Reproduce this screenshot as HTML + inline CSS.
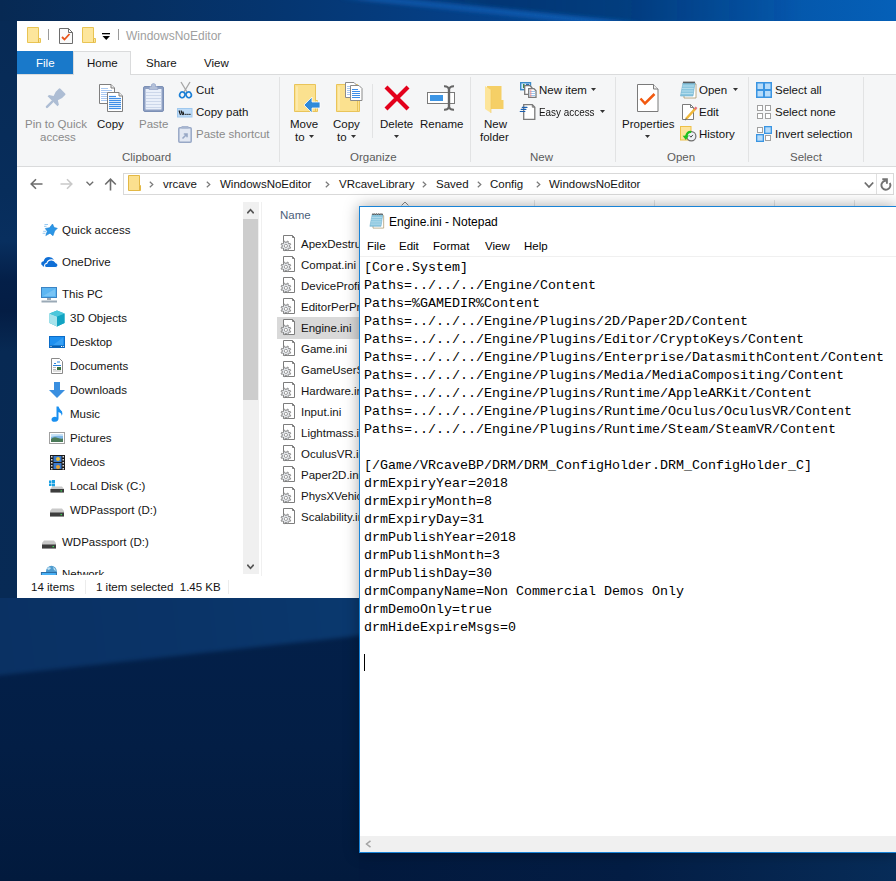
<!DOCTYPE html>
<html><head><meta charset="utf-8">
<style>
*{box-sizing:border-box}
html,body{margin:0;padding:0}
body{width:896px;height:881px;overflow:hidden;position:relative;font-family:"Liberation Sans",sans-serif;font-size:12px;color:#141414;background:#0a2a55}
.a{position:absolute}
.t{position:absolute;white-space:nowrap;font-size:11.5px;line-height:12px}
.m{position:absolute;white-space:pre;font-family:"Liberation Mono",monospace;font-size:13.33px;line-height:18px;color:#000}
svg{position:absolute;overflow:visible}
</style></head><body>
<!-- desktop background -->
<div class="a" style="left:0;top:0;width:896px;height:881px;background:linear-gradient(180deg,#0b2b57 0px,#0a2a55 250px,#092851 330px,#0a2b57 600px,#06224a 881px)"></div>
<svg style="left:0;top:0;overflow:hidden" width="896" height="21" viewBox="0 0 896 21">
<defs><linearGradient id="tg" x1="0" x2="1" y1="0" y2="0"><stop offset="0" stop-color="#072953"/><stop offset="0.3" stop-color="#05356f"/><stop offset="0.5" stop-color="#053f85"/><stop offset="0.7" stop-color="#044a98"/><stop offset="0.85" stop-color="#0455a8"/><stop offset="1" stop-color="#0560b8"/></linearGradient>
<filter id="bl" x="-20%" y="-200%" width="140%" height="500%"><feGaussianBlur stdDeviation="2.5"/></filter>
<filter id="bl2" x="-20%" y="-200%" width="140%" height="500%"><feGaussianBlur stdDeviation="5"/></filter></defs>
<rect width="896" height="21" fill="url(#tg)"/>
<linearGradient id="dg" x1="0" x2="1" y1="0" y2="0"><stop offset="0" stop-color="#052f66" stop-opacity="0"/><stop offset="0.3" stop-color="#052f66" stop-opacity="0.6"/><stop offset="0.6" stop-color="#052f66" stop-opacity="0.5"/><stop offset="1" stop-color="#052f66" stop-opacity="0"/></linearGradient><polygon points="360,-6 800,-6 800,24 640,24" fill="url(#dg)" filter="url(#bl)"/>
<polygon points="340,-3 372,-3 640,24 606,24" fill="#1f74d6" opacity="0.85" filter="url(#bl)"/>
</svg>
<div class="a" style="left:0;top:598px;width:359px;height:283px;overflow:hidden;background:linear-gradient(180deg,#03204a 0px,#031e45 150px,#021a3d 283px)">
<div class="a" style="left:-20px;top:-60px;width:420px;height:116px;background:linear-gradient(90deg,#0a3163 0%,#0a3468 50%,#0b3a70 100%);transform:rotate(-6.3deg);filter:blur(2px)"></div>
</div>
<div class="a" style="left:359px;top:852px;width:537px;height:29px;background:linear-gradient(90deg,#02193d 0%,#031d44 50%,#072c58 100%)"></div>
<div class="a" style="left:0;top:21px;width:17px;height:577px;background:linear-gradient(180deg,#072a55 0px,#072d5b 170px,#082f5f 220px,#041f48 260px,#041d44 290px,#072953 330px,#072a55 577px)"></div>
<!-- ============ EXPLORER ============ -->
<div class="a" style="left:17px;top:21px;width:879px;height:577px;background:#fff"></div>
<!-- title bar icons -->
<svg style="left:27px;top:27px" width="14" height="16" viewBox="0 0 14 16"><path d="M0.5 0.5H11.5V11.5H13.5V15.5H0.5Z" fill="#fde69c" stroke="#e9c453"/><path d="M11.5 11.5V15.5" stroke="#e3b845"/></svg>
<div class="a" style="left:48px;top:29px;width:1px;height:11px;background:#9a9a9a"></div>
<svg style="left:59px;top:28px" width="14" height="16" viewBox="0 0 14 16"><path d="M0.5 0.5H9.5L13.5 4.5V15.5H0.5Z" fill="#fafafa" stroke="#6d6d6d"/><path d="M9.5 0.5V4.5H13.5" fill="none" stroke="#6d6d6d"/><path d="M3 9L5.5 11.5L10.5 6" fill="none" stroke="#e8541a" stroke-width="1.8"/></svg>
<svg style="left:82px;top:27px" width="14" height="16" viewBox="0 0 14 16"><path d="M0.5 0.5H11.5V11.5H13.5V15.5H0.5Z" fill="#fde69c" stroke="#e9c453"/><path d="M11.5 11.5V15.5" stroke="#e3b845"/></svg>
<svg style="left:102px;top:33px" width="9" height="8" viewBox="0 0 9 8"><rect x="0" y="0" width="8" height="1.3" fill="#000"/><path d="M0.5 3H8L4.25 7Z" fill="#000"/></svg>
<div class="a" style="left:118px;top:29px;width:1px;height:11px;background:#9a9a9a"></div>
<div class="t" style="left:126px;top:30px;font-size:12px;color:#a0a0a0">WindowsNoEditor</div>

<!-- tabs -->
<div class="a" style="left:17px;top:51px;width:56px;height:23px;background:#1979ca"></div>
<div class="t" style="left:36px;top:57px;color:#fff">File</div>
<div class="a" style="left:17px;top:74px;width:879px;height:93px;background:#f5f6f7;border-top:1px solid #dadbdc;border-bottom:1px solid #dadbdc"></div>
<div class="a" style="left:73px;top:51px;width:58px;height:24px;background:#f5f6f7;border:1px solid #dadbdc;border-bottom:none"></div>
<div class="t" style="left:87px;top:57px">Home</div>
<div class="t" style="left:146px;top:57px">Share</div>
<div class="t" style="left:204px;top:57px">View</div>

<!-- ribbon group separators -->
<div class="a" style="left:279px;top:77px;width:1px;height:85px;background:#e2e3e4"></div>
<div class="a" style="left:372px;top:84px;width:1px;height:54px;background:#e2e3e4"></div>
<div class="a" style="left:470px;top:77px;width:1px;height:85px;background:#e2e3e4"></div>
<div class="a" style="left:615px;top:77px;width:1px;height:85px;background:#e2e3e4"></div>
<div class="a" style="left:748px;top:77px;width:1px;height:85px;background:#e2e3e4"></div>
<div class="a" style="left:863px;top:77px;width:1px;height:85px;background:#e2e3e4"></div>

<!-- group labels -->
<div class="t" style="left:122px;top:151px;color:#5b5b5b">Clipboard</div>
<div class="t" style="left:350px;top:151px;color:#5b5b5b">Organize</div>
<div class="t" style="left:530px;top:151px;color:#5b5b5b">New</div>
<div class="t" style="left:667px;top:151px;color:#5b5b5b">Open</div>
<div class="t" style="left:790px;top:151px;color:#5b5b5b">Select</div>

<!-- Clipboard group -->
<div class="t" style="left:25px;top:118px;color:#8a8a8a">Pin to Quick</div>
<div class="t" style="left:40px;top:131px;color:#8a8a8a">access</div>
<div class="t" style="left:97px;top:118px">Copy</div>
<div class="t" style="left:139px;top:118px;color:#8a8a8a">Paste</div>
<div class="t" style="left:196px;top:84px">Cut</div>
<div class="t" style="left:196px;top:106px">Copy path</div>
<div class="t" style="left:196px;top:128px;color:#8a8a8a">Paste shortcut</div>

<!-- Organize group -->
<div class="t" style="left:290px;top:118px">Move</div>
<div class="t" style="left:295px;top:131px">to</div>
<div class="t" style="left:333px;top:118px">Copy</div>
<div class="t" style="left:337px;top:131px">to</div>
<div class="t" style="left:380px;top:118px">Delete</div>
<div class="t" style="left:420px;top:118px">Rename</div>

<!-- New group -->
<div class="t" style="left:484px;top:118px">New</div>
<div class="t" style="left:480px;top:131px">folder</div>
<div class="t" style="left:539px;top:84px">New item</div>
<div class="t" style="left:539px;top:106px;transform:scaleX(0.86);transform-origin:0 0">Easy access</div>

<!-- Open group -->
<div class="t" style="left:622px;top:118px">Properties</div>
<div class="t" style="left:699px;top:84px">Open</div>
<div class="t" style="left:699px;top:106px">Edit</div>
<div class="t" style="left:699px;top:128px">History</div>

<!-- Select group -->
<div class="t" style="left:775px;top:84px">Select all</div>
<div class="t" style="left:775px;top:106px">Select none</div>
<div class="t" style="left:775px;top:128px">Invert selection</div>

<!-- dropdown arrows -->
<svg style="left:309px;top:135px" width="5" height="3"><path d="M0 0H5L2.5 3Z" fill="#333"/></svg>
<svg style="left:351px;top:135px" width="5" height="3"><path d="M0 0H5L2.5 3Z" fill="#333"/></svg>
<svg style="left:394px;top:135px" width="5" height="3"><path d="M0 0H5L2.5 3Z" fill="#333"/></svg>
<svg style="left:591px;top:88px" width="5" height="3"><path d="M0 0H5L2.5 3Z" fill="#333"/></svg>
<svg style="left:600px;top:110px" width="5" height="3"><path d="M0 0H5L2.5 3Z" fill="#333"/></svg>
<svg style="left:645px;top:135px" width="5" height="3"><path d="M0 0H5L2.5 3Z" fill="#333"/></svg>
<svg style="left:733px;top:88px" width="5" height="3"><path d="M0 0H5L2.5 3Z" fill="#333"/></svg>

<!-- address bar row -->
<div class="a" style="left:123px;top:173px;width:771px;height:22px;border:1px solid #d9d9d9;background:#fff"></div>
<div class="t" style="left:163px;top:178px">vrcave</div>
<div class="t" style="left:220px;top:178px">WindowsNoEditor</div>
<div class="t" style="left:339px;top:178px">VRcaveLibrary</div>
<div class="t" style="left:436px;top:178px">Saved</div>
<div class="t" style="left:490px;top:178px">Config</div>
<div class="t" style="left:549px;top:178px">WindowsNoEditor</div>

<!-- nav pane -->
<div class="t" style="left:62px;top:224px">Quick access</div>
<div class="t" style="left:62px;top:256px">OneDrive</div>
<div class="t" style="left:62px;top:288px">This PC</div>
<div class="t" style="left:70px;top:312px">3D Objects</div>
<div class="t" style="left:70px;top:336px">Desktop</div>
<div class="t" style="left:70px;top:360px">Documents</div>
<div class="t" style="left:70px;top:384px">Downloads</div>
<div class="t" style="left:70px;top:408px">Music</div>
<div class="t" style="left:70px;top:432px">Pictures</div>
<div class="t" style="left:70px;top:456px">Videos</div>
<div class="t" style="left:70px;top:480px">Local Disk (C:)</div>
<div class="t" style="left:70px;top:504px">WDPassport (D:)</div>
<div class="t" style="left:62px;top:536px">WDPassport (D:)</div>
<div class="a" style="left:17px;top:560px;width:226px;height:15px;overflow:hidden"><div class="t" style="left:45px;top:8px">Network</div></div>

<!-- nav pane scrollbar -->
<div class="a" style="left:243px;top:202px;width:16px;height:372px;background:#f0f0f0"></div>
<div class="a" style="left:243px;top:219px;width:15px;height:181px;background:#cdcdcd"></div>
<svg style="left:247px;top:208px" width="7" height="6" viewBox="0 0 7 6"><path d="M0.8 5.6V4.6L3.5 1.6L6.2 4.6V5.6" fill="none" stroke="#555" stroke-width="1.6"/></svg>
<svg style="left:247px;top:564px" width="7" height="6" viewBox="0 0 7 6"><path d="M0.8 0.4V1.4L3.5 4.4L6.2 1.4V0.4" fill="none" stroke="#555" stroke-width="1.6"/></svg>
<div class="a" style="left:261px;top:202px;width:1px;height:374px;background:#f0f0f0"></div>

<!-- file list -->
<div class="t" style="left:280px;top:209px;color:#4c607a">Name</div>
<svg style="left:401px;top:201px" width="8" height="5" viewBox="0 0 8 5"><path d="M0.6 4.4L4 1L7.4 4.4" fill="none" stroke="#8a8a8a" stroke-width="1"/></svg>
<div class="a" style="left:534px;top:200px;width:1px;height:8px;background:#e5e5e5"></div>
<div class="a" style="left:654px;top:200px;width:1px;height:8px;background:#e5e5e5"></div>
<div class="a" style="left:774px;top:200px;width:1px;height:8px;background:#e5e5e5"></div>
<div class="a" style="left:854px;top:200px;width:1px;height:8px;background:#e5e5e5"></div>
<div class="a" style="left:277px;top:317px;width:82px;height:22px;background:#d9d9d9"></div>
<div class="t" style="left:301px;top:238px">ApexDestruction.ini</div>
<div class="t" style="left:301px;top:259px">Compat.ini</div>
<div class="t" style="left:301px;top:280px">DeviceProfiles.ini</div>
<div class="t" style="left:301px;top:301px">EditorPerProjectUserSettings.ini</div>
<div class="t" style="left:301px;top:322px">Engine.ini</div>
<div class="t" style="left:301px;top:343px">Game.ini</div>
<div class="t" style="left:301px;top:364px">GameUserSettings.ini</div>
<div class="t" style="left:301px;top:385px">Hardware.ini</div>
<div class="t" style="left:301px;top:406px">Input.ini</div>
<div class="t" style="left:301px;top:427px">Lightmass.ini</div>
<div class="t" style="left:301px;top:448px">OculusVR.ini</div>
<div class="t" style="left:301px;top:469px">Paper2D.ini</div>
<div class="t" style="left:301px;top:490px">PhysXVehicles.ini</div>
<div class="t" style="left:301px;top:511px">Scalability.ini</div>

<!-- status bar -->
<div class="t" style="left:31px;top:581px">14 items</div>
<div class="a" style="left:85px;top:580px;width:1px;height:14px;background:#ececec"></div>
<div class="t" style="left:96px;top:581px">1 item selected&nbsp; 1.45 KB</div>
<div class="a" style="left:228px;top:580px;width:1px;height:14px;background:#ececec"></div>

<!-- ============ ICONS ============ -->
<!-- pin -->
<svg style="left:46px;top:88px" width="21" height="21" viewBox="0 0 21 21"><g transform="translate(8.6,11.25) rotate(45) translate(0,-11.6)" fill="#adbdd4"><path d="M-4.5 1.2Q-4.5 0 -3.3 0H3.3Q4.5 0 4.5 1.2V5.5L3 10L7 12.5V14.5H-7V12.5L-3 10L-4.5 5.5Z"/><rect x="-1.2" y="14" width="2.4" height="9.6" rx="1.2"/></g></svg>
<!-- copy -->
<svg style="left:99px;top:84px" width="25" height="28" viewBox="0 0 25 28">
<path d="M0.5 0.5H12L15.5 4V19.5H0.5Z" fill="#fff" stroke="#7f7f7f"/><path d="M12 0.5V4H15.5" fill="#eee" stroke="#7f7f7f"/>
<g stroke="#a9c9f2" stroke-width="1"><path d="M2 4.5H9"/><path d="M2 6.5H13"/><path d="M2 8.5H13"/><path d="M2 10.5H13"/><path d="M2 12.5H13"/><path d="M2 14.5H13"/><path d="M2 16.5H13"/></g>
<path d="M8.5 8.5H20L23.5 12V27.5H8.5Z" fill="#fff" stroke="#7f7f7f"/><path d="M20 8.5V12H23.5" fill="#eee" stroke="#7f7f7f"/>
<g stroke="#3d8ee8" stroke-width="1.2"><path d="M10 12.5H17"/><path d="M10 14.5H22"/><path d="M10 16.5H22"/><path d="M10 18.5H22"/><path d="M10 20.5H22"/><path d="M10 22.5H22"/><path d="M10 24.5H22"/></g>
</svg>
<!-- paste -->
<svg style="left:143px;top:83px" width="21" height="29" viewBox="0 0 21 29">
<rect x="0.5" y="3.5" width="20" height="25" rx="1.5" fill="#8d9fc2" stroke="#7b8fb5"/>
<rect x="2.5" y="6" width="16" height="20.5" fill="#eaf0fa"/>
<g stroke="#ccd7ea"><path d="M3 9.5H18"/><path d="M3 12.5H18"/><path d="M3 15.5H18"/><path d="M3 18.5H18"/><path d="M3 21.5H18"/><path d="M3 24.5H18"/></g>
<path d="M6 6.5L7 3.5H8.5V1.5Q10.5 -0.5 12.5 1.5V3.5H14L15 6.5Z" fill="#b3c0d8" stroke="#9aaacb" stroke-width="0.8"/>
</svg>
<!-- cut -->
<svg style="left:178px;top:81px" width="15" height="18" viewBox="0 0 15 18">
<path d="M3 1L9.3 11.5" stroke="#a5a5a5" stroke-width="1.3"/><path d="M12 1L5.7 11.5" stroke="#a5a5a5" stroke-width="1.3"/>
<ellipse cx="4.3" cy="13.8" rx="2.6" ry="2.9" transform="rotate(25 4.3 13.8)" fill="none" stroke="#1b7fd6" stroke-width="1.6"/><ellipse cx="10.7" cy="13.8" rx="2.6" ry="2.9" transform="rotate(-25 10.7 13.8)" fill="none" stroke="#1b7fd6" stroke-width="1.6"/>
</svg>
<!-- copy path -->
<svg style="left:177px;top:108px" width="16" height="10" viewBox="0 0 16 10">
<rect x="0.5" y="0.5" width="14.5" height="8.5" fill="#bfdcf7" stroke="#9fc8ee"/>
<path d="M2 2.5L3.5 7M4 2.5L5.5 7M5.8 3.5L7 7" stroke="#111" stroke-width="1.1" fill="none"/><rect x="8.3" y="5.8" width="1.2" height="1.2" fill="#111"/><rect x="10.3" y="5.8" width="1.2" height="1.2" fill="#111"/><rect x="12.3" y="5.8" width="1.2" height="1.2" fill="#111"/>
</svg>
<!-- paste shortcut -->
<svg style="left:178px;top:126px" width="14" height="17" viewBox="0 0 14 17">
<rect x="0.8" y="1.8" width="12.4" height="14.4" rx="1" fill="#e2e8f3" stroke="#98a8c6" stroke-width="1.5"/>
<rect x="3.5" y="0" width="7" height="2.5" rx="0.5" fill="#a8b6d0"/>
<path d="M4.5 12.5L8.5 8.5M5.8 8H9V11.2" stroke="#98a8c6" stroke-width="1.6" fill="none"/>
</svg>
<!-- move to -->
<svg style="left:294px;top:84px" width="27" height="29" viewBox="0 0 27 29">
<path d="M0.5 0.5H21.5V16.5H23.5V27.5H0.5Z" fill="#fbe18f" stroke="#e9c45a"/>
<path d="M3 2.5V26" stroke="#fdf2c8" stroke-width="1"/><path d="M21.5 16.5V27.5" stroke="#e9c45a"/>
<path d="M10 21L18 13V18H26V24H18V29Z" fill="#2f8ad9" stroke="#fff" stroke-width="0.8"/>
</svg>
<!-- copy to -->
<svg style="left:336px;top:82px" width="27" height="31" viewBox="0 0 27 31">
<path d="M0.5 2.5H21.5V18.5H23.5V29.5H0.5Z" fill="#fbe18f" stroke="#e9c45a"/>
<path d="M3 4.5V28" stroke="#fdf2c8" stroke-width="1"/><path d="M21.5 18.5V29.5" stroke="#e9c45a"/>
<path d="M9.5 0.5H18L21 3.5V15.5H9.5Z" fill="#fff" stroke="#8a8a8a"/>
<g stroke="#a9c9f2"><path d="M11 4.5H17"/><path d="M11 6.5H19"/><path d="M11 8.5H19"/><path d="M11 10.5H19"/><path d="M11 12.5H19"/></g>
<path d="M14.5 3.5H23L26 6.5V18.5H14.5Z" fill="#fff" stroke="#8a8a8a"/>
<g stroke="#3d8ee8"><path d="M16 7.5H22"/><path d="M16 9.5H24"/><path d="M16 11.5H24"/><path d="M16 13.5H24"/><path d="M16 15.5H24"/></g>
</svg>
<!-- delete -->
<svg style="left:384px;top:85px" width="26" height="26" viewBox="0 0 26 26"><path d="M2 2L24 24M24 2L2 24" stroke="#e3001b" stroke-width="4.2"/></svg>
<!-- rename -->
<svg style="left:427px;top:85px" width="28" height="26" viewBox="0 0 28 26">
<rect x="0.5" y="7.5" width="27" height="11" fill="#fff" stroke="#7a7a7a"/>
<rect x="3" y="10" width="13" height="6" fill="#3c95e5"/>
<path d="M22 3.5V22.5" stroke="#666" stroke-width="2.4"/>
<path d="M17 1.2Q21 1 22 4Q23 1 27 1.2" fill="none" stroke="#666" stroke-width="2"/>
<path d="M17 24.8Q21 25 22 22Q23 25 27 24.8" fill="none" stroke="#666" stroke-width="2"/>
</svg>
<!-- new folder -->
<svg style="left:485px;top:85px" width="19" height="28" viewBox="0 0 19 28">
<path d="M2 1H16.5V15H18.5V24H2Z" fill="#f5cf66"/>
<path d="M0 1L6 5V28L0 24Z" fill="#fde59a"/>
<path d="M6 5V28" stroke="#f0c75a" stroke-width="0.6"/>
</svg>
<!-- new item -->
<svg style="left:520px;top:82px" width="17" height="17" viewBox="0 0 17 17">
<rect x="0.7" y="0.7" width="9.8" height="7" fill="#d4eafc" stroke="#3a8ac8" stroke-width="1.4"/>
<rect x="3" y="2" width="1.5" height="4" fill="#3d8a4a"/><rect x="6" y="1.8" width="3" height="1.5" fill="#2a6fb0"/>
<path d="M4.7 3.7H10L12 5.7V12.4H4.7Z" fill="#fff" stroke="#7a7a7a" stroke-width="1.3"/>
<path d="M8.7 6.7H14L16 8.7V15.4H8.7Z" fill="#fff" stroke="#7a7a7a" stroke-width="1.3"/>
<g stroke="#9cc4ec"><path d="M9.5 9.5H15.2"/><path d="M9.5 11.5H15.2"/><path d="M9.5 13.5H15.2"/></g>
<path d="M10.8 7.3V15" stroke="#ee8a8a" stroke-width="0.9"/>
</svg>
<!-- easy access -->
<svg style="left:520px;top:104px" width="16" height="17" viewBox="0 0 16 17">
<path d="M3.7 0.7H12.3L14.8 3.2V15.3H3.7Z" fill="#fff" stroke="#7a7a7a" stroke-width="1.3"/><path d="M12.3 0.7V3.2H14.8" fill="none" stroke="#7a7a7a" stroke-width="1"/>
<path d="M2.3 3.4H7M1.2 5.4H5.9M0.2 7.5H4.9" stroke="#1a5fb0" stroke-width="1.1" stroke-linecap="round"/>
</svg>
<!-- properties -->
<svg style="left:637px;top:84px" width="22" height="29" viewBox="0 0 22 29">
<path d="M0.5 0.5H16.5L21 5V27.5H0.5Z" fill="#fff" stroke="#7a7a7a"/><path d="M16.5 0.5V5H21" fill="#eee" stroke="#7a7a7a"/>
<path d="M3.5 14.5L8 19.5L17.5 10" fill="none" stroke="#f25a10" stroke-width="2.5"/>
</svg>
<!-- open (notepad) -->
<svg style="left:680px;top:81px" width="17" height="18" viewBox="0 0 17 18">
<path d="M4 3H16V17H4Z" fill="#fff" stroke="#a89468" stroke-width="0.8"/>
<path d="M3 2H15L13 15H0.5Z" fill="#8cc7df" stroke="#6aaccb" stroke-width="0.6"/>
<g stroke="#bfe2ef" stroke-width="0.8"><path d="M2.5 5H14"/><path d="M2 7.5H13.7"/><path d="M1.7 10H13.3"/><path d="M1.3 12.5H13"/></g>
<path d="M3 2.2L4 0.6L5 2.2L6 0.6L7 2.2L8 0.6L9 2.2L10 0.6L11 2.2L12 0.6L13 2.2L14 0.6L15 2.2" fill="none" stroke="#444" stroke-width="0.9"/>
</svg>
<!-- edit -->
<svg style="left:682px;top:104px" width="16" height="17" viewBox="0 0 16 17">
<path d="M0.5 0.5H8.5L11.5 3.5V15.5H0.5Z" fill="#fff" stroke="#7a7a7a"/><path d="M8.5 0.5V3.5H11.5" fill="none" stroke="#7a7a7a"/>
<path d="M4 15L13.5 4.5" stroke="#f0b83a" stroke-width="2.6"/><path d="M12.8 5.3L14.5 3.3" stroke="#e8707a" stroke-width="2.4"/><path d="M3.2 16.2L4.5 14.5" stroke="#666" stroke-width="1.2"/>
</svg>
<!-- history -->
<svg style="left:679px;top:125px" width="18" height="18" viewBox="0 0 18 18">
<rect x="1.5" y="1.5" width="10.5" height="13.5" fill="#fde49c" stroke="#eec048"/>
<circle cx="12.3" cy="11.2" r="4.6" fill="#edf1f5" stroke="#6d6d6d" stroke-width="1.2"/>
<path d="M10.6 10.6L11.9 12.2L13.9 9.9" stroke="#333" stroke-width="0.9" fill="none"/>
<path d="M12.2 6.9Q8.3 6.6 7.2 11.2" stroke="#20c020" stroke-width="2.3" fill="none"/>
<path d="M3.6 10.8L10 10.4L6.8 15Z" fill="#20c020"/>
</svg>
<!-- select all -->
<svg style="left:756px;top:82px" width="16" height="16" viewBox="0 0 16 16">
<rect x="0" y="0" width="16" height="16" fill="#3a95e2"/>
<rect x="1.5" y="1.5" width="5.5" height="5.5" fill="#b7dcfa"/><rect x="9" y="1.5" width="5.5" height="5.5" fill="#b7dcfa"/>
<rect x="1.5" y="9" width="5.5" height="5.5" fill="#b7dcfa"/><rect x="9" y="9" width="5.5" height="5.5" fill="#b7dcfa"/>
</svg>
<!-- select none -->
<svg style="left:757px;top:105px" width="15" height="15" viewBox="0 0 15 15">
<g fill="#fff" stroke="#a0a0a0"><rect x="0.5" y="0.5" width="5" height="5"/><rect x="8.5" y="0.5" width="5" height="5"/><rect x="0.5" y="8.5" width="5" height="5"/><rect x="8.5" y="8.5" width="5" height="5"/></g>
</svg>
<!-- invert -->
<svg style="left:756px;top:126px" width="17" height="17" viewBox="0 0 17 17">
<g fill="#fff" stroke="#a0a0a0"><rect x="1.5" y="1.5" width="5" height="5"/><rect x="9.5" y="9.5" width="5" height="5"/></g>
<rect x="8" y="0" width="8" height="8" fill="#3a95e2"/><rect x="9.3" y="1.3" width="5.4" height="5.4" fill="#b7dcfa"/>
<rect x="0" y="8" width="8" height="8" fill="#3a95e2"/><rect x="1.3" y="9.3" width="5.4" height="5.4" fill="#b7dcfa"/>
</svg>

<!-- address bar nav -->
<svg style="left:30px;top:178px" width="13" height="12" viewBox="0 0 13 12"><path d="M12.5 6H1.5M6 1.2L1.2 6L6 10.8" fill="none" stroke="#6d6d6d" stroke-width="1.6"/></svg>
<svg style="left:60px;top:178px" width="13" height="12" viewBox="0 0 13 12"><path d="M0.5 6H11.5M7 1.2L11.8 6L7 10.8" fill="none" stroke="#c9c9c9" stroke-width="1.6"/></svg>
<svg style="left:86px;top:181px" width="8" height="5" viewBox="0 0 8 5"><path d="M0.5 0.7L3.8 4L7.2 0.7" fill="none" stroke="#6d6d6d" stroke-width="1.3"/></svg>
<svg style="left:104px;top:178px" width="13" height="13" viewBox="0 0 13 13"><path d="M6.5 12.5V1.5M1.2 6.5L6.5 1.2L11.8 6.5" fill="none" stroke="#6d6d6d" stroke-width="1.6"/></svg>
<svg style="left:128px;top:175px" width="14" height="16" viewBox="0 0 14 16"><path d="M0.5 0.5H11.5V10.5H12.5V15.5H0.5Z" fill="#fbe08f" stroke="#e3b845"/><path d="M11.5 10.5V15.5" stroke="#e3b845"/></svg>
<g>
<svg style="left:149px;top:181px" width="5" height="7" viewBox="0 0 5 7"><path d="M0.8 0.8L3.8 3.5L0.8 6.2" fill="none" stroke="#7a7a7a" stroke-width="1.2"/></svg>
<svg style="left:206px;top:181px" width="5" height="7" viewBox="0 0 5 7"><path d="M0.8 0.8L3.8 3.5L0.8 6.2" fill="none" stroke="#7a7a7a" stroke-width="1.2"/></svg>
<svg style="left:325px;top:181px" width="5" height="7" viewBox="0 0 5 7"><path d="M0.8 0.8L3.8 3.5L0.8 6.2" fill="none" stroke="#7a7a7a" stroke-width="1.2"/></svg>
<svg style="left:422px;top:181px" width="5" height="7" viewBox="0 0 5 7"><path d="M0.8 0.8L3.8 3.5L0.8 6.2" fill="none" stroke="#7a7a7a" stroke-width="1.2"/></svg>
<svg style="left:477px;top:181px" width="5" height="7" viewBox="0 0 5 7"><path d="M0.8 0.8L3.8 3.5L0.8 6.2" fill="none" stroke="#7a7a7a" stroke-width="1.2"/></svg>
<svg style="left:536px;top:181px" width="5" height="7" viewBox="0 0 5 7"><path d="M0.8 0.8L3.8 3.5L0.8 6.2" fill="none" stroke="#7a7a7a" stroke-width="1.2"/></svg>
</g>
<svg style="left:864px;top:181px" width="10" height="8" viewBox="0 0 10 8"><path d="M0.8 1.5L5 6L9.2 1.5" fill="none" stroke="#6d6d6d" stroke-width="1.8"/></svg>
<div class="a" style="left:876px;top:174px;width:1px;height:20px;background:#e0e0e0"></div>
<svg style="left:880px;top:178px" width="12" height="14" viewBox="0 0 12 14"><path d="M9.8 5.0A4.5 4.5 0 1 1 5.9 2.75" fill="none" stroke="#737373" stroke-width="1.9"/><path d="M2.3 1.2H6.9V5.7" fill="none" stroke="#737373" stroke-width="1.9"/></svg>

<!-- nav pane icons -->
<svg style="left:42px;top:223px" width="17" height="14" viewBox="0 0 17 14"><path d="M10.5 1.0L12.2 4.6L15.3 5.3L12.6 8.0L11.0 12.7L8.0 10.2L3.8 12.6L5.3 8.2L3.3 5.5L7.6 4.7Z" fill="#2b96e6" stroke="#1b80d2" stroke-width="0.6" stroke-linejoin="round"/><path d="M2.5 1.5H6M2 3.3H4.5M1.2 8.3H4M0.6 10.3H3.5" stroke="#8cc4f0" stroke-width="0.9"/></svg>
<svg style="left:41px;top:256px" width="17" height="12" viewBox="0 0 17 12"><path d="M1.5 9.5Q-0.3 8.8 0.3 6.8Q0.8 5.3 2.6 5.3Q3.6 1 8 1Q11.2 1 12.8 3.5L7 10.5H2Z" fill="#0f6fd6"/><path d="M5.2 11.5Q3.3 11.3 3.6 9.2Q3.9 7.5 5.8 7.4Q6.8 3.8 10.6 3.9Q13.6 4 14.8 6.6Q17.2 7 17 9.3Q16.8 11.5 14.5 11.5Z" fill="#0f6fd6" stroke="#fff" stroke-width="1.1"/></svg>
<svg style="left:41px;top:287px" width="17" height="16" viewBox="0 0 17 16"><rect x="0.5" y="0.5" width="15" height="10" fill="#5cb6f2" stroke="#3b84c4"/><path d="M2 9L14 2V9Z" fill="#8ccdf7" opacity="0.6"/><rect x="6" y="11" width="4" height="2" fill="#9aa9b6"/><rect x="0.5" y="13.5" width="15.5" height="2" fill="#9aa9b6"/></svg>
<svg style="left:49px;top:310px" width="16" height="17" viewBox="0 0 16 17"><path d="M8 0.5L15.5 3.5V13L8 16.5L0.5 13V3.5Z" fill="#25b5ce"/><path d="M0.5 3.5L8 6.5V16.5L0.5 13Z" fill="#a6e3ec"/><path d="M8 6.5L15.5 3.5V13L8 16.5Z" fill="#12a3c2"/><path d="M0.5 3.5L8 0.5L15.5 3.5L8 6.5Z" fill="#4cc7db"/></svg>
<svg style="left:49px;top:336px" width="16" height="12" viewBox="0 0 16 12"><rect x="0.5" y="0.5" width="15" height="11" fill="#1e90f0" stroke="#0b6cc8"/><path d="M4 9L14 1.5V9Z" fill="#4fb0f8" opacity="0.5"/><rect x="1" y="9.5" width="14" height="2" fill="#0a5fae"/><rect x="1.5" y="10" width="1" height="1" fill="#fff"/><rect x="12" y="10" width="1" height="1" fill="#fff"/><rect x="13.8" y="10" width="1" height="1" fill="#fff"/></svg>
<svg style="left:51px;top:358px" width="13" height="16" viewBox="0 0 13 16"><path d="M0.5 0.5H8.5L11.5 3.5V15.5H0.5Z" fill="#fff" stroke="#8a8a8a"/><path d="M3 5.5H5M6 4H9M2 7.5H10" stroke="#2a84dc"/><path d="M2 9.5H5M2 11.5H5M2 13H10" stroke="#aaa" stroke-width="0.8"/><rect x="6" y="9" width="4" height="3" fill="#3c7040"/></svg>
<svg style="left:49px;top:382px" width="16" height="16" viewBox="0 0 16 16"><path d="M5 0H11V8H16L8 16L0 8H5Z" fill="#3a8fe0"/></svg>
<svg style="left:51px;top:406px" width="12" height="16" viewBox="0 0 12 16"><path d="M5.5 0.5H7.5Q8.5 3.5 11 5.5Q12 7.5 10.5 10Q11 7 7.5 6V12.5Q7.5 15.5 4 15.8Q0.5 16 0.5 13.5Q0.8 11 4 10.8Q5 10.8 5.5 11.2Z" fill="#1a90f0"/></svg>
<svg style="left:49px;top:432px" width="16" height="12" viewBox="0 0 16 12"><rect x="0.5" y="0.5" width="15" height="11" fill="#fff" stroke="#a0a0a0"/><rect x="2" y="2" width="12" height="8" fill="#7eb6e6"/><path d="M2 7Q5 4 9 6Q12 7 14 6.5V10H2Z" fill="#4a7a58"/><path d="M2 2H14V4Q8 3 2 5Z" fill="#c8e2f6"/></svg>
<svg style="left:50px;top:455px" width="15" height="15" viewBox="0 0 15 15"><rect x="0" y="0" width="15" height="15" fill="#1b1b1b"/><g fill="#ddd"><rect x="1" y="1" width="1.5" height="1.5"/><rect x="1" y="4" width="1.5" height="1.5"/><rect x="1" y="7" width="1.5" height="1.5"/><rect x="1" y="10" width="1.5" height="1.5"/><rect x="1" y="13" width="1.5" height="1.5"/><rect x="12.5" y="1" width="1.5" height="1.5"/><rect x="12.5" y="4" width="1.5" height="1.5"/><rect x="12.5" y="7" width="1.5" height="1.5"/><rect x="12.5" y="10" width="1.5" height="1.5"/><rect x="12.5" y="13" width="1.5" height="1.5"/></g><rect x="3.5" y="1" width="8" height="6" fill="#3a7acc"/><rect x="3.5" y="8" width="8" height="6" fill="#3a7acc"/><circle cx="8" cy="4" r="2" fill="#e8c040"/><circle cx="8" cy="12" r="2" fill="#e8a030"/></svg>
<svg style="left:49px;top:480px" width="16" height="13" viewBox="0 0 16 13"><g fill="#1ba1e2"><rect x="0" y="0.5" width="2.5" height="2.5"/><rect x="3" y="0" width="3" height="3"/><rect x="0" y="3.5" width="2.5" height="2.5"/><rect x="3" y="3.5" width="3" height="3"/></g><path d="M3 6.5H13L15 9V12.5H1.5V9Z" fill="#c9c9c9"/><rect x="1.5" y="9" width="13.5" height="3.5" fill="#3d3d3d"/><rect x="11.5" y="10.3" width="1.5" height="1.2" fill="#39d353"/></svg>
<svg style="left:50px;top:508px" width="14" height="9" viewBox="0 0 14 9"><path d="M2 0.5H12L14 3V8.5H0V3Z" fill="#c9c9c9"/><rect x="0" y="4.5" width="14" height="4" fill="#3d3d3d"/><rect x="10.5" y="6" width="1.5" height="1.2" fill="#39d353"/></svg>
<svg style="left:42px;top:540px" width="14" height="9" viewBox="0 0 14 9"><path d="M2 0.5H12L14 3V8.5H0V3Z" fill="#c9c9c9"/><rect x="0" y="4.5" width="14" height="4" fill="#3d3d3d"/><rect x="10.5" y="6" width="1.5" height="1.2" fill="#39d353"/></svg>
<div class="a" style="left:40px;top:565px;width:18px;height:10px;overflow:hidden"><svg style="left:0;top:0" width="18" height="14" viewBox="0 0 18 14"><circle cx="11.4" cy="6.2" r="5.4" fill="#4f9ccf"/><path d="M7 3Q9 1.5 11 3Q10 5 8 5Z M13 2Q15.5 3 16 6L14 5Z" fill="#bfe0f2"/><rect x="1.4" y="7.5" width="15" height="3.5" fill="#48b0f5" stroke="#2b6ea6"/></svg></div>

<!-- file icons -->
<svg style="left:281px;top:235px" width="15" height="16" viewBox="0 0 15 16"><path d="M2.5 0.5H11.5L13.5 2.5V15.5H2.5Z" fill="#fff" stroke="#7d7d7d"/><path d="M11.5 0.5V2.5H13.5" fill="none" stroke="#7d7d7d"/><path d="M8.44 11.55L9.73 12.18L9.22 13.41L7.86 12.95L6.95 13.86L7.41 15.22L6.18 15.73L5.55 14.44L4.25 14.44L3.62 15.73L2.39 15.22L2.85 13.86L1.94 12.95L0.58 13.41L0.07 12.18L1.36 11.55L1.36 10.25L0.07 9.62L0.58 8.39L1.94 8.85L2.85 7.94L2.39 6.58L3.62 6.07L4.25 7.36L5.55 7.36L6.18 6.07L7.41 6.58L6.95 7.94L7.86 8.85L9.22 8.39L9.73 9.62L8.44 10.25Z" fill="#e6e9ed" stroke="#808080" stroke-width="0.9" stroke-linejoin="round"/><circle cx="4.9" cy="10.9" r="1.6" fill="#fff" stroke="#8a8a8a" stroke-width="0.8"/></svg>
<svg style="left:281px;top:256px" width="15" height="16" viewBox="0 0 15 16"><path d="M2.5 0.5H11.5L13.5 2.5V15.5H2.5Z" fill="#fff" stroke="#7d7d7d"/><path d="M11.5 0.5V2.5H13.5" fill="none" stroke="#7d7d7d"/><path d="M8.44 11.55L9.73 12.18L9.22 13.41L7.86 12.95L6.95 13.86L7.41 15.22L6.18 15.73L5.55 14.44L4.25 14.44L3.62 15.73L2.39 15.22L2.85 13.86L1.94 12.95L0.58 13.41L0.07 12.18L1.36 11.55L1.36 10.25L0.07 9.62L0.58 8.39L1.94 8.85L2.85 7.94L2.39 6.58L3.62 6.07L4.25 7.36L5.55 7.36L6.18 6.07L7.41 6.58L6.95 7.94L7.86 8.85L9.22 8.39L9.73 9.62L8.44 10.25Z" fill="#e6e9ed" stroke="#808080" stroke-width="0.9" stroke-linejoin="round"/><circle cx="4.9" cy="10.9" r="1.6" fill="#fff" stroke="#8a8a8a" stroke-width="0.8"/></svg>
<svg style="left:281px;top:277px" width="15" height="16" viewBox="0 0 15 16"><path d="M2.5 0.5H11.5L13.5 2.5V15.5H2.5Z" fill="#fff" stroke="#7d7d7d"/><path d="M11.5 0.5V2.5H13.5" fill="none" stroke="#7d7d7d"/><path d="M8.44 11.55L9.73 12.18L9.22 13.41L7.86 12.95L6.95 13.86L7.41 15.22L6.18 15.73L5.55 14.44L4.25 14.44L3.62 15.73L2.39 15.22L2.85 13.86L1.94 12.95L0.58 13.41L0.07 12.18L1.36 11.55L1.36 10.25L0.07 9.62L0.58 8.39L1.94 8.85L2.85 7.94L2.39 6.58L3.62 6.07L4.25 7.36L5.55 7.36L6.18 6.07L7.41 6.58L6.95 7.94L7.86 8.85L9.22 8.39L9.73 9.62L8.44 10.25Z" fill="#e6e9ed" stroke="#808080" stroke-width="0.9" stroke-linejoin="round"/><circle cx="4.9" cy="10.9" r="1.6" fill="#fff" stroke="#8a8a8a" stroke-width="0.8"/></svg>
<svg style="left:281px;top:298px" width="15" height="16" viewBox="0 0 15 16"><path d="M2.5 0.5H11.5L13.5 2.5V15.5H2.5Z" fill="#fff" stroke="#7d7d7d"/><path d="M11.5 0.5V2.5H13.5" fill="none" stroke="#7d7d7d"/><path d="M8.44 11.55L9.73 12.18L9.22 13.41L7.86 12.95L6.95 13.86L7.41 15.22L6.18 15.73L5.55 14.44L4.25 14.44L3.62 15.73L2.39 15.22L2.85 13.86L1.94 12.95L0.58 13.41L0.07 12.18L1.36 11.55L1.36 10.25L0.07 9.62L0.58 8.39L1.94 8.85L2.85 7.94L2.39 6.58L3.62 6.07L4.25 7.36L5.55 7.36L6.18 6.07L7.41 6.58L6.95 7.94L7.86 8.85L9.22 8.39L9.73 9.62L8.44 10.25Z" fill="#e6e9ed" stroke="#808080" stroke-width="0.9" stroke-linejoin="round"/><circle cx="4.9" cy="10.9" r="1.6" fill="#fff" stroke="#8a8a8a" stroke-width="0.8"/></svg>
<svg style="left:281px;top:319px" width="15" height="16" viewBox="0 0 15 16"><path d="M2.5 0.5H11.5L13.5 2.5V15.5H2.5Z" fill="#fff" stroke="#7d7d7d"/><path d="M11.5 0.5V2.5H13.5" fill="none" stroke="#7d7d7d"/><path d="M8.44 11.55L9.73 12.18L9.22 13.41L7.86 12.95L6.95 13.86L7.41 15.22L6.18 15.73L5.55 14.44L4.25 14.44L3.62 15.73L2.39 15.22L2.85 13.86L1.94 12.95L0.58 13.41L0.07 12.18L1.36 11.55L1.36 10.25L0.07 9.62L0.58 8.39L1.94 8.85L2.85 7.94L2.39 6.58L3.62 6.07L4.25 7.36L5.55 7.36L6.18 6.07L7.41 6.58L6.95 7.94L7.86 8.85L9.22 8.39L9.73 9.62L8.44 10.25Z" fill="#e6e9ed" stroke="#808080" stroke-width="0.9" stroke-linejoin="round"/><circle cx="4.9" cy="10.9" r="1.6" fill="#fff" stroke="#8a8a8a" stroke-width="0.8"/></svg>
<svg style="left:281px;top:340px" width="15" height="16" viewBox="0 0 15 16"><path d="M2.5 0.5H11.5L13.5 2.5V15.5H2.5Z" fill="#fff" stroke="#7d7d7d"/><path d="M11.5 0.5V2.5H13.5" fill="none" stroke="#7d7d7d"/><path d="M8.44 11.55L9.73 12.18L9.22 13.41L7.86 12.95L6.95 13.86L7.41 15.22L6.18 15.73L5.55 14.44L4.25 14.44L3.62 15.73L2.39 15.22L2.85 13.86L1.94 12.95L0.58 13.41L0.07 12.18L1.36 11.55L1.36 10.25L0.07 9.62L0.58 8.39L1.94 8.85L2.85 7.94L2.39 6.58L3.62 6.07L4.25 7.36L5.55 7.36L6.18 6.07L7.41 6.58L6.95 7.94L7.86 8.85L9.22 8.39L9.73 9.62L8.44 10.25Z" fill="#e6e9ed" stroke="#808080" stroke-width="0.9" stroke-linejoin="round"/><circle cx="4.9" cy="10.9" r="1.6" fill="#fff" stroke="#8a8a8a" stroke-width="0.8"/></svg>
<svg style="left:281px;top:361px" width="15" height="16" viewBox="0 0 15 16"><path d="M2.5 0.5H11.5L13.5 2.5V15.5H2.5Z" fill="#fff" stroke="#7d7d7d"/><path d="M11.5 0.5V2.5H13.5" fill="none" stroke="#7d7d7d"/><path d="M8.44 11.55L9.73 12.18L9.22 13.41L7.86 12.95L6.95 13.86L7.41 15.22L6.18 15.73L5.55 14.44L4.25 14.44L3.62 15.73L2.39 15.22L2.85 13.86L1.94 12.95L0.58 13.41L0.07 12.18L1.36 11.55L1.36 10.25L0.07 9.62L0.58 8.39L1.94 8.85L2.85 7.94L2.39 6.58L3.62 6.07L4.25 7.36L5.55 7.36L6.18 6.07L7.41 6.58L6.95 7.94L7.86 8.85L9.22 8.39L9.73 9.62L8.44 10.25Z" fill="#e6e9ed" stroke="#808080" stroke-width="0.9" stroke-linejoin="round"/><circle cx="4.9" cy="10.9" r="1.6" fill="#fff" stroke="#8a8a8a" stroke-width="0.8"/></svg>
<svg style="left:281px;top:382px" width="15" height="16" viewBox="0 0 15 16"><path d="M2.5 0.5H11.5L13.5 2.5V15.5H2.5Z" fill="#fff" stroke="#7d7d7d"/><path d="M11.5 0.5V2.5H13.5" fill="none" stroke="#7d7d7d"/><path d="M8.44 11.55L9.73 12.18L9.22 13.41L7.86 12.95L6.95 13.86L7.41 15.22L6.18 15.73L5.55 14.44L4.25 14.44L3.62 15.73L2.39 15.22L2.85 13.86L1.94 12.95L0.58 13.41L0.07 12.18L1.36 11.55L1.36 10.25L0.07 9.62L0.58 8.39L1.94 8.85L2.85 7.94L2.39 6.58L3.62 6.07L4.25 7.36L5.55 7.36L6.18 6.07L7.41 6.58L6.95 7.94L7.86 8.85L9.22 8.39L9.73 9.62L8.44 10.25Z" fill="#e6e9ed" stroke="#808080" stroke-width="0.9" stroke-linejoin="round"/><circle cx="4.9" cy="10.9" r="1.6" fill="#fff" stroke="#8a8a8a" stroke-width="0.8"/></svg>
<svg style="left:281px;top:403px" width="15" height="16" viewBox="0 0 15 16"><path d="M2.5 0.5H11.5L13.5 2.5V15.5H2.5Z" fill="#fff" stroke="#7d7d7d"/><path d="M11.5 0.5V2.5H13.5" fill="none" stroke="#7d7d7d"/><path d="M8.44 11.55L9.73 12.18L9.22 13.41L7.86 12.95L6.95 13.86L7.41 15.22L6.18 15.73L5.55 14.44L4.25 14.44L3.62 15.73L2.39 15.22L2.85 13.86L1.94 12.95L0.58 13.41L0.07 12.18L1.36 11.55L1.36 10.25L0.07 9.62L0.58 8.39L1.94 8.85L2.85 7.94L2.39 6.58L3.62 6.07L4.25 7.36L5.55 7.36L6.18 6.07L7.41 6.58L6.95 7.94L7.86 8.85L9.22 8.39L9.73 9.62L8.44 10.25Z" fill="#e6e9ed" stroke="#808080" stroke-width="0.9" stroke-linejoin="round"/><circle cx="4.9" cy="10.9" r="1.6" fill="#fff" stroke="#8a8a8a" stroke-width="0.8"/></svg>
<svg style="left:281px;top:424px" width="15" height="16" viewBox="0 0 15 16"><path d="M2.5 0.5H11.5L13.5 2.5V15.5H2.5Z" fill="#fff" stroke="#7d7d7d"/><path d="M11.5 0.5V2.5H13.5" fill="none" stroke="#7d7d7d"/><path d="M8.44 11.55L9.73 12.18L9.22 13.41L7.86 12.95L6.95 13.86L7.41 15.22L6.18 15.73L5.55 14.44L4.25 14.44L3.62 15.73L2.39 15.22L2.85 13.86L1.94 12.95L0.58 13.41L0.07 12.18L1.36 11.55L1.36 10.25L0.07 9.62L0.58 8.39L1.94 8.85L2.85 7.94L2.39 6.58L3.62 6.07L4.25 7.36L5.55 7.36L6.18 6.07L7.41 6.58L6.95 7.94L7.86 8.85L9.22 8.39L9.73 9.62L8.44 10.25Z" fill="#e6e9ed" stroke="#808080" stroke-width="0.9" stroke-linejoin="round"/><circle cx="4.9" cy="10.9" r="1.6" fill="#fff" stroke="#8a8a8a" stroke-width="0.8"/></svg>
<svg style="left:281px;top:445px" width="15" height="16" viewBox="0 0 15 16"><path d="M2.5 0.5H11.5L13.5 2.5V15.5H2.5Z" fill="#fff" stroke="#7d7d7d"/><path d="M11.5 0.5V2.5H13.5" fill="none" stroke="#7d7d7d"/><path d="M8.44 11.55L9.73 12.18L9.22 13.41L7.86 12.95L6.95 13.86L7.41 15.22L6.18 15.73L5.55 14.44L4.25 14.44L3.62 15.73L2.39 15.22L2.85 13.86L1.94 12.95L0.58 13.41L0.07 12.18L1.36 11.55L1.36 10.25L0.07 9.62L0.58 8.39L1.94 8.85L2.85 7.94L2.39 6.58L3.62 6.07L4.25 7.36L5.55 7.36L6.18 6.07L7.41 6.58L6.95 7.94L7.86 8.85L9.22 8.39L9.73 9.62L8.44 10.25Z" fill="#e6e9ed" stroke="#808080" stroke-width="0.9" stroke-linejoin="round"/><circle cx="4.9" cy="10.9" r="1.6" fill="#fff" stroke="#8a8a8a" stroke-width="0.8"/></svg>
<svg style="left:281px;top:466px" width="15" height="16" viewBox="0 0 15 16"><path d="M2.5 0.5H11.5L13.5 2.5V15.5H2.5Z" fill="#fff" stroke="#7d7d7d"/><path d="M11.5 0.5V2.5H13.5" fill="none" stroke="#7d7d7d"/><path d="M8.44 11.55L9.73 12.18L9.22 13.41L7.86 12.95L6.95 13.86L7.41 15.22L6.18 15.73L5.55 14.44L4.25 14.44L3.62 15.73L2.39 15.22L2.85 13.86L1.94 12.95L0.58 13.41L0.07 12.18L1.36 11.55L1.36 10.25L0.07 9.62L0.58 8.39L1.94 8.85L2.85 7.94L2.39 6.58L3.62 6.07L4.25 7.36L5.55 7.36L6.18 6.07L7.41 6.58L6.95 7.94L7.86 8.85L9.22 8.39L9.73 9.62L8.44 10.25Z" fill="#e6e9ed" stroke="#808080" stroke-width="0.9" stroke-linejoin="round"/><circle cx="4.9" cy="10.9" r="1.6" fill="#fff" stroke="#8a8a8a" stroke-width="0.8"/></svg>
<svg style="left:281px;top:487px" width="15" height="16" viewBox="0 0 15 16"><path d="M2.5 0.5H11.5L13.5 2.5V15.5H2.5Z" fill="#fff" stroke="#7d7d7d"/><path d="M11.5 0.5V2.5H13.5" fill="none" stroke="#7d7d7d"/><path d="M8.44 11.55L9.73 12.18L9.22 13.41L7.86 12.95L6.95 13.86L7.41 15.22L6.18 15.73L5.55 14.44L4.25 14.44L3.62 15.73L2.39 15.22L2.85 13.86L1.94 12.95L0.58 13.41L0.07 12.18L1.36 11.55L1.36 10.25L0.07 9.62L0.58 8.39L1.94 8.85L2.85 7.94L2.39 6.58L3.62 6.07L4.25 7.36L5.55 7.36L6.18 6.07L7.41 6.58L6.95 7.94L7.86 8.85L9.22 8.39L9.73 9.62L8.44 10.25Z" fill="#e6e9ed" stroke="#808080" stroke-width="0.9" stroke-linejoin="round"/><circle cx="4.9" cy="10.9" r="1.6" fill="#fff" stroke="#8a8a8a" stroke-width="0.8"/></svg>
<svg style="left:281px;top:508px" width="15" height="16" viewBox="0 0 15 16"><path d="M2.5 0.5H11.5L13.5 2.5V15.5H2.5Z" fill="#fff" stroke="#7d7d7d"/><path d="M11.5 0.5V2.5H13.5" fill="none" stroke="#7d7d7d"/><path d="M8.44 11.55L9.73 12.18L9.22 13.41L7.86 12.95L6.95 13.86L7.41 15.22L6.18 15.73L5.55 14.44L4.25 14.44L3.62 15.73L2.39 15.22L2.85 13.86L1.94 12.95L0.58 13.41L0.07 12.18L1.36 11.55L1.36 10.25L0.07 9.62L0.58 8.39L1.94 8.85L2.85 7.94L2.39 6.58L3.62 6.07L4.25 7.36L5.55 7.36L6.18 6.07L7.41 6.58L6.95 7.94L7.86 8.85L9.22 8.39L9.73 9.62L8.44 10.25Z" fill="#e6e9ed" stroke="#808080" stroke-width="0.9" stroke-linejoin="round"/><circle cx="4.9" cy="10.9" r="1.6" fill="#fff" stroke="#8a8a8a" stroke-width="0.8"/></svg>
<!-- ============ NOTEPAD ============ -->
<div class="a" style="left:359px;top:206px;width:537px;height:647px;background:#fff;border:1px solid #1883d7;border-right:none;box-shadow:0 0 14px rgba(0,0,0,0.35)"></div>
<div class="t" style="left:389px;top:216px;font-size:12px;color:#000">Engine.ini - Notepad</div>
<div class="a" style="left:360px;top:836px;width:536px;height:16px;background:#f0f0f0"></div>
<div class="t" style="left:367px;top:240px;color:#000">File</div>
<div class="t" style="left:399px;top:240px;color:#000">Edit</div>
<div class="t" style="left:433px;top:240px;color:#000">Format</div>
<div class="t" style="left:485px;top:240px;color:#000">View</div>
<div class="t" style="left:524px;top:240px;color:#000">Help</div>
<div class="a" style="left:360px;top:256px;width:536px;height:1px;background:#f0f0f0"></div>
<div class="a" style="left:364px;top:654px;width:1px;height:17px;background:#000"></div>
<svg style="left:365px;top:840px" width="7" height="8" viewBox="0 0 7 8"><path d="M5.5 0.8L1.5 4L5.5 7.2" fill="none" stroke="#a3a3a3" stroke-width="1.5"/></svg>
<svg style="left:369px;top:213px" width="16" height="16" viewBox="0 0 17 18">
<path d="M4 3H16V17H4Z" fill="#fff" stroke="#a89468" stroke-width="0.8"/>
<path d="M3 2H15L13 15H0.5Z" fill="#8cc7df" stroke="#6aaccb" stroke-width="0.6"/>
<g stroke="#bfe2ef" stroke-width="0.8"><path d="M2.5 5H14"/><path d="M2 7.5H13.7"/><path d="M1.7 10H13.3"/><path d="M1.3 12.5H13"/></g>
<path d="M3 2.2L4 0.6L5 2.2L6 0.6L7 2.2L8 0.6L9 2.2L10 0.6L11 2.2L12 0.6L13 2.2L14 0.6L15 2.2" fill="none" stroke="#444" stroke-width="0.9"/>
</svg>

<div class="m" style="left:364px;top:259px">[Core.System]
Paths=../../../Engine/Content
Paths=%GAMEDIR%Content
Paths=../../../Engine/Plugins/2D/Paper2D/Content
Paths=../../../Engine/Plugins/Editor/CryptoKeys/Content
Paths=../../../Engine/Plugins/Enterprise/DatasmithContent/Content
Paths=../../../Engine/Plugins/Media/MediaCompositing/Content
Paths=../../../Engine/Plugins/Runtime/AppleARKit/Content
Paths=../../../Engine/Plugins/Runtime/Oculus/OculusVR/Content
Paths=../../../Engine/Plugins/Runtime/Steam/SteamVR/Content

[/Game/VRcaveBP/DRM/DRM_ConfigHolder.DRM_ConfigHolder_C]
drmExpiryYear=2018
drmExpiryMonth=8
drmExpiryDay=31
drmPublishYear=2018
drmPublishMonth=3
drmPublishDay=30
drmCompanyName=Non Commercial Demos Only
drmDemoOnly=true
drmHideExpireMsgs=0
</div>

</body></html>
